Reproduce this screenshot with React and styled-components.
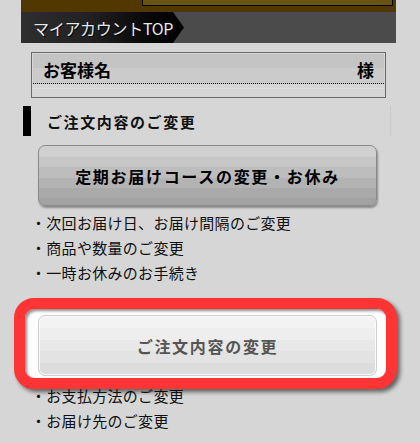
import React from 'react'
import styled, { createGlobalStyle } from 'styled-components'

const GlobalStyle = createGlobalStyle`
  html, body {
    margin: 0;
    padding: 0;
    background: #d6d6d6;
  }
  body {
    font-family: "Noto Sans CJK JP", "Noto Sans", sans-serif;
    color: #111;
  }
`;

const menuA = ['次回お届け日、お届け間隔のご変更', '商品や数量のご変更', '一時お休みのお手続き'];
const menuB = ['お支払方法のご変更', 'お届け先のご変更'];

export default function App() {
  return (
    <Page>
      <GlobalStyle />
      <Column>
        <TopBand>
          <OliveBox />
        </TopBand>
        <NavBar>
          <Tab>マイアカウントTOP</Tab>
        </NavBar>

        <NameBox>
          <NameRow>
            <span>お客様名</span>
            <span>様</span>
          </NameRow>
          <NameFoot />
        </NameBox>

        <SectionHeading>ご注文内容のご変更</SectionHeading>

        <BigButton>定期お届けコースの変更・お休み</BigButton>
        <List>
          {menuA.map((t) => (
            <Item key={t}>・{t}</Item>
          ))}
        </List>

        <HighlightWrap>
          <Highlight />
          <BigButton light>ご注文内容の変更</BigButton>
        </HighlightWrap>
        <List tight>
          {menuB.map((t) => (
            <Item key={t}>・{t}</Item>
          ))}
        </List>
      </Column>
    </Page>
  )
}

const Page = styled.div`
  min-height: 443px;
  background: #d6d6d6;
  overflow: hidden;
`;
const Column = styled.div`
  width: 375px;
  margin-left: 21px;
  display: flex;
  flex-direction: column;
`;
const TopBand = styled.div`
  height: 12px;
  background: #503800;
  padding: 0 3px 0 121px;
`;
const OliveBox = styled.div`
  height: 5px;
  background: #6a5414;
  border: 1px solid #000;
  border-top: none;
`;
const NavBar = styled.div`
  height: 31px;
  background: #4b4b4b;
  display: flex;
`;
const Tab = styled.div`
  width: 163px;
  height: 31px;
  box-sizing: border-box;
  padding-left: 12px;
  display: flex;
  align-items: center;
  font-size: 16px;
  line-height: 1;
  color: #e8e8e8;
  text-shadow: 1px 1px 0 #000;
  letter-spacing: -0.3px;
  background: linear-gradient(to right, #2e2e2e 0%, #222 40%, #0a0a0a 75%, #000 100%);
  clip-path: polygon(0 0, 152px 0, 163px 50%, 152px 100%, 0 100%);
`;
const NameBox = styled.div`
  margin: 9px 10px 0 10px;
  height: 46px;
  box-sizing: border-box;
  border: 1px solid #6a6a6a;
  padding: 1px;
`;
const NameRow = styled.div`
  height: 30px;
  box-sizing: border-box;
  padding: 2px 10px 0;
  display: flex;
  justify-content: space-between;
  align-items: center;
  font-size: 17px;
  font-weight: bold;
  line-height: 1;
  color: #000;
  background: linear-gradient(#c4c4c4 0 50%, #cbcbcb 50% 100%);
  border-bottom: 1px dotted #111;
`;
const NameFoot = styled.div`
  height: 4px;
  border-bottom: 1px solid #dedede;
`;
const SectionHeading = styled.div`
  margin: 8px 5px 0 2px;
  height: 30px;
  box-sizing: border-box;
  border-left: 8px solid #000;
  border-right: 1px solid #c8c8c8;
  padding-left: 16px;
  display: flex;
  align-items: center;
  font-size: 15px;
  font-weight: bold;
  letter-spacing: 1.6px;
  line-height: 1;
  color: #111;
`;
const BigButton = styled.div`
  position: relative;
  z-index: 1;
  margin: ${(p) => (p.light ? '0' : '9px 0 0 17px')};
  width: 339px;
  height: 61px;
  box-sizing: border-box;
  border-radius: 7px;
  border: 1px solid ${(p) => (p.light ? '#cfcfcf' : '#8a8a8a')};
  display: flex;
  justify-content: center;
  align-items: center;
  font-size: 16px;
  font-weight: bold;
  letter-spacing: 1.7px;
  line-height: 1;
  color: ${(p) => (p.light ? '#555' : '#000')};
  background: ${(p) =>
    p.light
      ? 'linear-gradient(#f3f3f3 0 20%, #eeeeee 20% 40%, #e8e8e8 40% 60%, #e3e3e3 60% 80%, #dcdcdc 80% 100%)'
      : 'linear-gradient(#d0d0d0 0 18%, #c6c6c6 18% 36%, #bdbdbd 36% 54%, #b3b3b3 54% 72%, #aaaaaa 72% 88%, #a2a2a2 88% 100%)'};
  box-shadow: ${(p) =>
    p.light ? 'inset 0 0 0 1px #fafafa' : '1px 2px 2px rgba(0, 0, 0, 0.35)'};
`;
const List = styled.ul`
  list-style: none;
  margin: ${(p) => (p.tight ? '7px 0 0 10px' : '4px 0 0 10px')};
  padding: 0;
`;
const Item = styled.li`
  font-size: 15px;
  line-height: 25px;
  letter-spacing: 0.3px;
  color: #111;
`;
const HighlightWrap = styled.div`
  position: relative;
  z-index: 1;
  margin: 30px 0 0 17px;
  width: 339px;
`;
const Highlight = styled.div`
  position: absolute;
  left: -24px;
  top: -17px;
  right: -20px;
  bottom: -13px;
  border: 11px solid #ff3434;
  border-radius: 20px;
  background: #fff;
  box-shadow: 3px 3px 4px rgba(0, 0, 0, 0.55), inset 2px 2px 3px rgba(0, 0, 0, 0.45);
  z-index: 0;
  pointer-events: none;
`;
